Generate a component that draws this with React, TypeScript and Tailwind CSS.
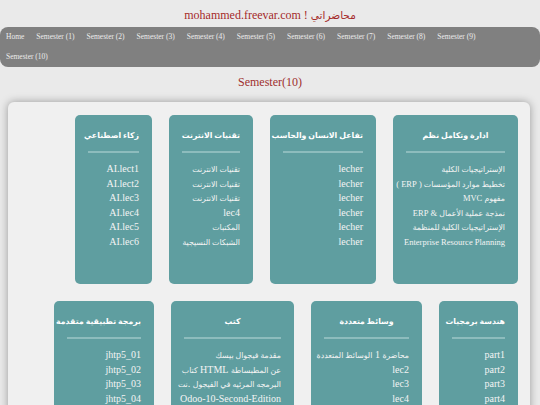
import React from 'react';

interface Course {
  title: string;
  width: string;
  small?: boolean;
  items: string[];
}

const NAV = [
  'Home',
  'Semester (1)',
  'Semester (2)',
  'Semester (3)',
  'Semester (4)',
  'Semester (5)',
  'Semester (6)',
  'Semester (7)',
  'Semester (8)',
  'Semester (9)',
  'Semester (10)',
];

// order is right to left, the grid is rtl
const COURSES: Course[] = [
  {
    title: 'ادارة وتكامل نظم',
    width: 'w-[125px]',
    small: true,
    items: [
      'الإستراتيجيات الكلية',
      'تخطيط موارد المؤسسات ( ERP )',
      'مفهوم MVC',
      'نمذجة عملية الأعمال & ERP',
      'الإستراتيجيات الكلية للمنظمة',
      'Enterprise Resource Planning',
    ],
  },
  {
    title: 'تفاعل الانسان والحاسب',
    width: 'w-[106px]',
    items: ['lecher', 'lecher', 'lecher', 'lecher', 'lecher', 'lecher'],
  },
  {
    title: 'تقنيات الانترنت',
    width: 'w-[84px]',
    items: ['تقنيات الانترنت', 'تقنيات الانترنت', 'تقنيات الانترنت', 'lec4', 'المكتبات', 'الشبكات النسيجية'],
  },
  {
    title: 'زكاء اصطناعي',
    width: 'w-[77px]',
    items: ['AI.lect1', 'AI.lect2', 'AI.lec3', 'AI.lec4', 'AI.lec5', 'AI.lec6'],
  },
  {
    title: 'هندسة برمجيات',
    width: 'w-[79px]',
    items: ['part1', 'part2', 'part3', 'part4', 'part5', 'part6'],
  },
  {
    title: 'وسائط متعددة',
    width: 'w-[111px]',
    items: ['محاضرة 1 الوسائط المتعددة', 'lec2', 'lec3', 'lec4', 'lec5', 'lec6'],
  },
  {
    title: 'كتب',
    width: 'w-[123px]',
    items: [
      'مقدمة فيجوال بيسك',
      'عن المطبساطة HTML كتاب',
      'البرمجه المرئيه في الفيجول .نت',
      'Odoo-10-Second-Edition',
      'كتاب C++',
      'كتاب Java',
    ],
  },
  {
    title: 'برمجة تطبيقية متقدمة',
    width: 'w-[100px]',
    items: ['jhtp5_01', 'jhtp5_02', 'jhtp5_03', 'jhtp5_04', 'jhtp5_05', 'jhtp5_06'],
  },
];

// arabic glyphs come out of DejaVu and run wide, so they get a smaller size
function Mixed({ text, arClass }: { text: string; arClass: string }) {
  const parts = text.split(/([\u0600-\u06FF][\u0600-\u06FF\s]*[\u0600-\u06FF]|[\u0600-\u06FF])/);
  return (
    <>
      {parts.map((p, i) =>
        /[\u0600-\u06FF]/.test(p) ? (
          <span key={i} className={arClass}>
            {p}
          </span>
        ) : (
          <React.Fragment key={i}>{p}</React.Fragment>
        ),
      )}
    </>
  );
}

function CourseCard({ course }: { course: Course }) {
  return (
    <div className={`${course.width} bg-[#5f9ea0] rounded-[5px] pt-[13px] px-[13px] pb-[35px]`}>
      <div className="h-[16px] text-center text-white font-bold text-[7.8px] leading-[16px] whitespace-nowrap">
        {course.title}
      </div>
      <div className="h-[2px] bg-[#8dbcbd] mt-[7px]" />
      <ul className="mt-[9px]" dir="rtl">
        {course.items.map((item, i) => (
          <li
            key={i}
            className={`h-[14.5px] text-right text-[#f4f4f4] leading-[14.5px] whitespace-nowrap ${
              course.small ? 'text-[8.5px]' : 'text-[10px]'
            }`}
          >
            <Mixed text={item} arClass="text-[7.8px] leading-[0]" />
          </li>
        ))}
      </ul>
    </div>
  );
}

export default function App() {
  return (
    <div
      className="min-h-screen bg-[#eaeaea] pb-[20px]"
      style={{ fontFamily: '"Liberation Serif", "DejaVu Sans", serif' }}
    >
      <div className="h-[27px] flex items-center justify-center pt-[3px]">
        <h1 className="text-[12px] leading-[16px] text-[#a52a2a]">
          mohammed.freevar.com ! <span className="text-[10.5px] leading-[0]">محاضراتي</span>
        </h1>
      </div>

      <nav className="bg-[#808080] rounded-[8px] h-[40px]">
        <ul className="flex flex-wrap pr-[40px]">
          {NAV.map((n) => (
            <li key={n} className="px-[6px] leading-[20px] text-[7.5px] text-[#ececec] whitespace-nowrap">
              {n}
            </li>
          ))}
        </ul>
      </nav>

      <h2 className="mt-[7px] text-center text-[12px] leading-[16px] text-[#a0302f]">Semester(10)</h2>

      <div className="ml-[8px] w-[522px] mt-[12px] bg-[#f0f0f0] rounded-[6px] shadow-[0_0_8px_rgba(0,0,0,0.35)] pt-[13px] pr-[12px] pl-[12px] pb-[20px]">
        <div dir="rtl" className="flex flex-wrap gap-[17px]">
          {COURSES.map((c) => (
            <CourseCard key={c.title} course={c} />
          ))}
        </div>
      </div>
    </div>
  );
}
